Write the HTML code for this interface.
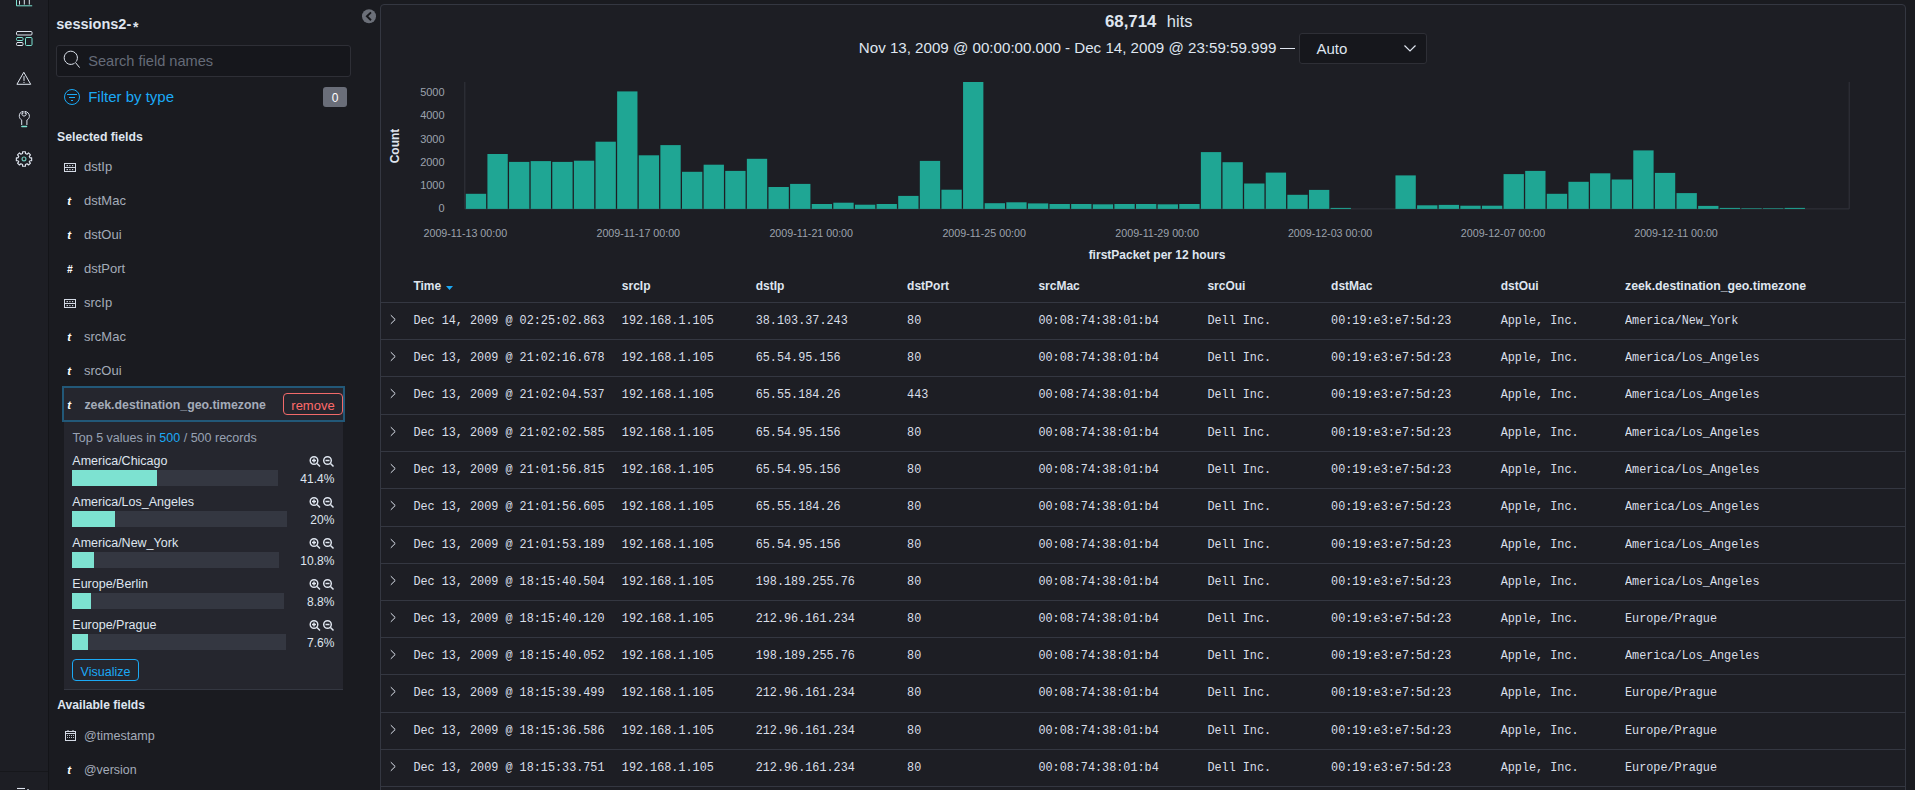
<!DOCTYPE html>
<html><head><meta charset="utf-8"><title>Discover</title>
<style>
html,body{margin:0;padding:0;width:1915px;height:790px;overflow:hidden;background:#1a1b20;}
.t{position:absolute;white-space:pre;}
.r{position:absolute;}
</style></head><body>
<div class="r" style="left:0px;top:0px;width:48px;height:790px;background:#1d1e24;"></div>
<div class="r" style="left:48px;top:0px;width:1px;height:790px;background:#131418;"></div>
<div class="r" style="left:0px;top:771px;width:48px;height:1px;background:#16171b;"></div>
<svg class="r" style="left:0;top:0" width="48" height="790" viewBox="0 0 48 790">
<g fill="none" stroke-width="1" stroke-linecap="round">
 <path d="M16.5 -2 V5.8 H31.8" stroke="#7de2d1"/>
 <path d="M19.5 1 V4.2 M24.3 -1 V4.2 M29.3 -2 V4.2" stroke="#dfe5ef"/>
 <rect x="16.5" y="31.5" width="15.5" height="3.5" rx="1" stroke="#dfe5ef"/>
 <rect x="16.5" y="37.5" width="6.5" height="3" rx="1" stroke="#7de2d1"/>
 <rect x="16.5" y="42.5" width="6.5" height="3" rx="1" stroke="#dfe5ef"/>
 <rect x="25.5" y="37.5" width="6.5" height="8" rx="1" stroke="#7de2d1"/>
 <path d="M24 72.6 L30.7 84.3 H17.3 Z" stroke="#dfe5ef" stroke-linejoin="round"/>
 <path d="M24 76.5 V80.5" stroke="#dfe5ef"/>
 <path d="M24 82.3 V82.6" stroke="#dfe5ef"/>
 <path d="M22.9 111.5 C20.4 111.8 19.1 113.9 19.3 116.4 C19.5 118.3 20.6 119.4 21.7 120.1 V124.6 M25.2 111.5 C27.9 111.8 29.5 113.9 29.4 116.4 C29.2 118.3 28.1 119.4 26.9 120.1 V124.6 M22.9 111.5 V113.6 H21.8 C22 115.3 22.9 116 24.05 116 C25.2 116 26.2 115.3 26.4 113.6 H25.2 V111.5" stroke="#dfe5ef" stroke-linejoin="round"/>
 <path d="M21.8 126.5 H26.6" stroke="#7de2d1" stroke-width="1.3"/>
 <circle cx="24" cy="158.9" r="1.9" stroke="#7de2d1" stroke-width="1.2" opacity="0.85"/>
</g>
<g transform="translate(24 158.9) scale(0.9)" fill="none" stroke="#dfe5ef" stroke-width="1.25" stroke-linejoin="round">
 <path d="M-1.6 -8 H1.6 V-6 L3.5 -5.2 L5 -6.6 L7.2 -4.4 L5.8 -2.9 L6.6 -1.2 H8.5 V2 H6.6 L5.8 3.2 L7.2 4.6 L5 6.8 L3.5 5.4 L1.6 6.2 V8.2 H-1.6 V6.2 L-3.5 5.4 L-5 6.8 L-7.2 4.6 L-5.8 3.2 L-6.6 2 H-8.5 V-1.2 H-6.6 L-5.8 -2.9 L-7.2 -4.4 L-5 -6.6 L-3.5 -5.2 L-1.6 -6 Z"/>
</g>
<path d="M17 788.5 H25" stroke="#dfe5ef" stroke-width="1.1"/><rect x="27" y="789" width="2" height="1" fill="#9aa0aa"/>
</svg>
<div class="t" style="left:56.30px;top:17px;font-size:14.5px;line-height:14.5px;color:#dfe5ef;font-weight:700;font-family:'Liberation Sans', sans-serif;">sessions2-</div>
<div class="t" style="left:133.00px;top:20px;font-size:14px;line-height:14px;color:#dfe5ef;font-weight:700;font-family:'Liberation Sans', sans-serif;">*</div>
<div class="r" style="left:56px;top:45px;width:295px;height:32px;background:#16171c;border:1px solid #2e2f36;border-radius:3px;box-sizing:border-box;"></div>
<svg class="r" style="left:62px;top:50px" width="20" height="20" viewBox="0 0 20 20"><path d="M12.6 13.2 A6.6 6.6 0 1 1 14.2 11.6" fill="none" stroke="#dfe5ef" stroke-width="1"/><path d="M13.3 12.3 L17.6 17.6" stroke="#dfe5ef" stroke-width="1"/></svg>
<div class="t" style="left:88.20px;top:54px;font-size:14.6px;line-height:14.6px;color:#656b78;font-weight:400;font-family:'Liberation Sans', sans-serif;">Search field names</div>
<svg class="r" style="left:62px;top:87px" width="20" height="20" viewBox="0 0 20 20"><circle cx="10" cy="10" r="7.5" fill="none" stroke="#1ba9f5" stroke-width="1"/><path d="M5 7.5 H15 M7 10.5 H13 M9 13.5 H11" stroke="#1ba9f5" stroke-width="1"/></svg>
<div class="t" style="left:88.20px;top:89px;font-size:15px;line-height:15px;color:#1ba9f5;font-weight:400;font-family:'Liberation Sans', sans-serif;">Filter by type</div>
<div class="r" style="left:323px;top:87px;width:24px;height:20px;background:#6a6e79;border-radius:3px;"></div>
<div class="t" style="left:-65.00px;width:800px;text-align:center;top:92px;font-size:12px;line-height:12px;color:#ffffff;font-weight:400;font-family:'Liberation Sans', sans-serif;">0</div>
<div class="t" style="left:57.00px;top:131px;font-size:12.25px;line-height:12.25px;color:#dfe5ef;font-weight:700;font-family:'Liberation Sans', sans-serif;">Selected fields</div>
<svg class="r" style="left:64px;top:162px" width="14" height="12" viewBox="0 0 14 12"><g fill="none" stroke="#d4dae5" stroke-width="1"><rect x="0.5" y="1.5" width="11" height="8"/><path d="M0.5 5.5 H11.5"/></g><g fill="#c8ced8"><rect x="2.5" y="3" width="1.5" height="1.2"/><rect x="5.3" y="3" width="1.2" height="1.2"/><rect x="8" y="3" width="1.2" height="1.2"/><rect x="2.5" y="7" width="1.5" height="1.2"/><rect x="5.3" y="7" width="1.2" height="1.2"/><rect x="8" y="7" width="1.2" height="1.2"/></g></svg>
<div class="t" style="left:84.00px;top:160px;font-size:13px;line-height:13px;color:#a4acb9;font-weight:400;font-family:'Liberation Sans', sans-serif;">dstIp</div>
<div class="t" style="left:67.30px;top:195px;font-size:11.6px;line-height:11.6px;color:#ffffff;font-weight:700;font-family:'Liberation Sans', sans-serif;font-style:italic;">t</div>
<div class="t" style="left:84.00px;top:194px;font-size:13px;line-height:13px;color:#a4acb9;font-weight:400;font-family:'Liberation Sans', sans-serif;">dstMac</div>
<div class="t" style="left:67.30px;top:229px;font-size:11.6px;line-height:11.6px;color:#ffffff;font-weight:700;font-family:'Liberation Sans', sans-serif;font-style:italic;">t</div>
<div class="t" style="left:84.00px;top:228px;font-size:13px;line-height:13px;color:#a4acb9;font-weight:400;font-family:'Liberation Sans', sans-serif;">dstOui</div>
<div class="t" style="left:66.90px;top:265px;font-size:10px;line-height:10px;color:#ffffff;font-weight:700;font-family:'Liberation Sans', sans-serif;font-style:italic;">#</div>
<div class="t" style="left:84.00px;top:262px;font-size:13px;line-height:13px;color:#a4acb9;font-weight:400;font-family:'Liberation Sans', sans-serif;">dstPort</div>
<svg class="r" style="left:64px;top:298px" width="14" height="12" viewBox="0 0 14 12"><g fill="none" stroke="#d4dae5" stroke-width="1"><rect x="0.5" y="1.5" width="11" height="8"/><path d="M0.5 5.5 H11.5"/></g><g fill="#c8ced8"><rect x="2.5" y="3" width="1.5" height="1.2"/><rect x="5.3" y="3" width="1.2" height="1.2"/><rect x="8" y="3" width="1.2" height="1.2"/><rect x="2.5" y="7" width="1.5" height="1.2"/><rect x="5.3" y="7" width="1.2" height="1.2"/><rect x="8" y="7" width="1.2" height="1.2"/></g></svg>
<div class="t" style="left:84.00px;top:296px;font-size:13px;line-height:13px;color:#a4acb9;font-weight:400;font-family:'Liberation Sans', sans-serif;">srcIp</div>
<div class="t" style="left:67.30px;top:331px;font-size:11.6px;line-height:11.6px;color:#ffffff;font-weight:700;font-family:'Liberation Sans', sans-serif;font-style:italic;">t</div>
<div class="t" style="left:84.00px;top:330px;font-size:13px;line-height:13px;color:#a4acb9;font-weight:400;font-family:'Liberation Sans', sans-serif;">srcMac</div>
<div class="t" style="left:67.30px;top:365px;font-size:11.6px;line-height:11.6px;color:#ffffff;font-weight:700;font-family:'Liberation Sans', sans-serif;font-style:italic;">t</div>
<div class="t" style="left:84.00px;top:364px;font-size:13px;line-height:13px;color:#a4acb9;font-weight:400;font-family:'Liberation Sans', sans-serif;">srcOui</div>
<div class="r" style="left:62px;top:386px;width:283px;height:36px;background:#25262e;border:2px solid #225878;box-sizing:border-box;"></div>
<div class="t" style="left:67.30px;top:399px;font-size:11.6px;line-height:11.6px;color:#ffffff;font-weight:700;font-family:'Liberation Sans', sans-serif;font-style:italic;">t</div>
<div class="t" style="left:84.40px;top:399px;font-size:12.33px;line-height:12.33px;color:#a4acb9;font-weight:700;font-family:'Liberation Sans', sans-serif;">zeek.destination_geo.timezone</div>
<div class="r" style="left:283px;top:393px;width:60px;height:22px;border:1px solid #f26a6a;border-radius:4px;box-sizing:border-box;"></div>
<div class="t" style="left:-87.00px;width:800px;text-align:center;top:399px;font-size:13px;line-height:13px;color:#ff6b6b;font-weight:400;font-family:'Liberation Sans', sans-serif;">remove</div>
<div class="r" style="left:64px;top:422px;width:279px;height:268px;background:#25262e;"></div>
<div class="r" style="left:64px;top:689px;width:279px;height:1px;background:#343741;"></div>
<div class="t" style="left:72.50px;top:432px;font-size:12.5px;line-height:12.5px;color:#98a2b3;font-weight:400;font-family:'Liberation Sans', sans-serif;">Top 5 values in <span style="color:#1ba9f5">500</span> / 500 records</div>
<div class="t" style="left:72.30px;top:455px;font-size:12.5px;line-height:12.5px;color:#dfe5ef;font-weight:400;font-family:'Liberation Sans', sans-serif;">America/Chicago</div>
<div class="r" style="left:72px;top:470px;width:206px;height:16px;background:#343741;"></div>
<div class="r" style="left:72px;top:470px;width:85px;height:16px;background:#7de2d1;"></div>
<div class="t" style="right:1580.70px;text-align:right;top:473px;font-size:12px;line-height:12px;color:#dfe5ef;font-weight:400;font-family:'Liberation Sans', sans-serif;">41.4%</div>
<svg class="r" style="left:308px;top:455px" width="28" height="13" viewBox="0 0 28 13"><g fill="none" stroke="#dfe5ef" stroke-width="1.45"><circle cx="6" cy="5.5" r="3.8"/><path d="M9 8.5 L12 11.5 M4 5.5 H8 M6 3.5 V7.5"/><circle cx="19.5" cy="5.5" r="3.8"/><path d="M22.5 8.5 L25.5 11.5 M17.5 5.5 H21.5"/></g></svg>
<div class="t" style="left:72.30px;top:496px;font-size:12.5px;line-height:12.5px;color:#dfe5ef;font-weight:400;font-family:'Liberation Sans', sans-serif;">America/Los_Angeles</div>
<div class="r" style="left:72px;top:511px;width:215px;height:16px;background:#343741;"></div>
<div class="r" style="left:72px;top:511px;width:43px;height:16px;background:#7de2d1;"></div>
<div class="t" style="right:1580.70px;text-align:right;top:514px;font-size:12px;line-height:12px;color:#dfe5ef;font-weight:400;font-family:'Liberation Sans', sans-serif;">20%</div>
<svg class="r" style="left:308px;top:496px" width="28" height="13" viewBox="0 0 28 13"><g fill="none" stroke="#dfe5ef" stroke-width="1.45"><circle cx="6" cy="5.5" r="3.8"/><path d="M9 8.5 L12 11.5 M4 5.5 H8 M6 3.5 V7.5"/><circle cx="19.5" cy="5.5" r="3.8"/><path d="M22.5 8.5 L25.5 11.5 M17.5 5.5 H21.5"/></g></svg>
<div class="t" style="left:72.30px;top:537px;font-size:12.5px;line-height:12.5px;color:#dfe5ef;font-weight:400;font-family:'Liberation Sans', sans-serif;">America/New_York</div>
<div class="r" style="left:72px;top:552px;width:207px;height:16px;background:#343741;"></div>
<div class="r" style="left:72px;top:552px;width:22px;height:16px;background:#7de2d1;"></div>
<div class="t" style="right:1580.70px;text-align:right;top:555px;font-size:12px;line-height:12px;color:#dfe5ef;font-weight:400;font-family:'Liberation Sans', sans-serif;">10.8%</div>
<svg class="r" style="left:308px;top:537px" width="28" height="13" viewBox="0 0 28 13"><g fill="none" stroke="#dfe5ef" stroke-width="1.45"><circle cx="6" cy="5.5" r="3.8"/><path d="M9 8.5 L12 11.5 M4 5.5 H8 M6 3.5 V7.5"/><circle cx="19.5" cy="5.5" r="3.8"/><path d="M22.5 8.5 L25.5 11.5 M17.5 5.5 H21.5"/></g></svg>
<div class="t" style="left:72.30px;top:578px;font-size:12.5px;line-height:12.5px;color:#dfe5ef;font-weight:400;font-family:'Liberation Sans', sans-serif;">Europe/Berlin</div>
<div class="r" style="left:72px;top:593px;width:212px;height:16px;background:#343741;"></div>
<div class="r" style="left:72px;top:593px;width:19px;height:16px;background:#7de2d1;"></div>
<div class="t" style="right:1580.70px;text-align:right;top:596px;font-size:12px;line-height:12px;color:#dfe5ef;font-weight:400;font-family:'Liberation Sans', sans-serif;">8.8%</div>
<svg class="r" style="left:308px;top:578px" width="28" height="13" viewBox="0 0 28 13"><g fill="none" stroke="#dfe5ef" stroke-width="1.45"><circle cx="6" cy="5.5" r="3.8"/><path d="M9 8.5 L12 11.5 M4 5.5 H8 M6 3.5 V7.5"/><circle cx="19.5" cy="5.5" r="3.8"/><path d="M22.5 8.5 L25.5 11.5 M17.5 5.5 H21.5"/></g></svg>
<div class="t" style="left:72.30px;top:619px;font-size:12.5px;line-height:12.5px;color:#dfe5ef;font-weight:400;font-family:'Liberation Sans', sans-serif;">Europe/Prague</div>
<div class="r" style="left:72px;top:634px;width:214px;height:16px;background:#343741;"></div>
<div class="r" style="left:72px;top:634px;width:16px;height:16px;background:#7de2d1;"></div>
<div class="t" style="right:1580.70px;text-align:right;top:637px;font-size:12px;line-height:12px;color:#dfe5ef;font-weight:400;font-family:'Liberation Sans', sans-serif;">7.6%</div>
<svg class="r" style="left:308px;top:619px" width="28" height="13" viewBox="0 0 28 13"><g fill="none" stroke="#dfe5ef" stroke-width="1.45"><circle cx="6" cy="5.5" r="3.8"/><path d="M9 8.5 L12 11.5 M4 5.5 H8 M6 3.5 V7.5"/><circle cx="19.5" cy="5.5" r="3.8"/><path d="M22.5 8.5 L25.5 11.5 M17.5 5.5 H21.5"/></g></svg>
<div class="r" style="left:72px;top:659px;width:67px;height:22px;border:1px solid #1ba9f5;border-radius:4px;box-sizing:border-box;"></div>
<div class="t" style="left:-294.50px;width:800px;text-align:center;top:666px;font-size:12.5px;line-height:12.5px;color:#1ba9f5;font-weight:400;font-family:'Liberation Sans', sans-serif;">Visualize</div>
<div class="t" style="left:57.30px;top:699px;font-size:12.1px;line-height:12.1px;color:#dfe5ef;font-weight:700;font-family:'Liberation Sans', sans-serif;">Available fields</div>
<svg class="r" style="left:64px;top:729px" width="13" height="13" viewBox="0 0 13 13"><g fill="none" stroke="#d4dae5" stroke-width="1"><rect x="1.5" y="2.5" width="10" height="9"/><path d="M1.5 4.5 H11.5 M4 1 V2.5 M9 1 V2.5"/></g><g fill="#b8bec8"><rect x="3" y="6" width="1" height="1"/><rect x="5" y="6" width="1" height="1"/><rect x="7" y="6" width="1" height="1"/><rect x="9" y="6" width="1" height="1"/><rect x="3" y="8" width="1" height="1"/><rect x="5" y="8" width="1" height="1"/><rect x="7" y="8" width="1" height="1"/><rect x="9" y="8" width="1" height="1"/></g></svg>
<div class="t" style="left:84.00px;top:730px;font-size:12.55px;line-height:12.55px;color:#a4acb9;font-weight:400;font-family:'Liberation Sans', sans-serif;">@timestamp</div>
<div class="t" style="left:67.30px;top:764px;font-size:11.6px;line-height:11.6px;color:#ffffff;font-weight:700;font-family:'Liberation Sans', sans-serif;font-style:italic;">t</div>
<div class="t" style="left:84.00px;top:764px;font-size:12.4px;line-height:12.4px;color:#a4acb9;font-weight:400;font-family:'Liberation Sans', sans-serif;">@version</div>
<svg class="r" style="left:361px;top:9px" width="16" height="16" viewBox="0 0 16 16"><circle cx="8" cy="7.25" r="7" fill="#6b6f78"/><path d="M10 3.4 L5.9 7.3 L10 11.2" fill="none" stroke="#16171b" stroke-width="1.9"/></svg>
<div class="r" style="left:380px;top:4px;width:1526px;height:800px;background:#1d1e24;border:1px solid #343741;border-radius:4px;box-sizing:border-box;"></div>
<div class="t" style="left:1105.00px;top:14px;font-size:16.8px;line-height:16.8px;color:#dfe5ef;font-weight:700;font-family:'Liberation Sans', sans-serif;">68,714</div>
<div class="t" style="left:1166.80px;top:13px;font-size:16.5px;line-height:16.5px;color:#dfe5ef;font-weight:400;font-family:'Liberation Sans', sans-serif;">hits</div>
<div class="t" style="left:858.80px;top:40px;font-size:15.14px;line-height:15.14px;color:#dfe5ef;font-weight:400;font-family:'Liberation Sans', sans-serif;">Nov 13, 2009 @ 00:00:00.000 - Dec 14, 2009 @ 23:59:59.999</div>
<div class="r" style="left:1280px;top:48px;width:15px;height:1px;background:#dfe5ef;"></div>
<div class="r" style="left:1299px;top:33px;width:128px;height:31px;background:#16171c;border:1px solid #2e2f36;border-radius:3px;box-sizing:border-box;"></div>
<div class="t" style="left:1316.50px;top:41px;font-size:15px;line-height:15px;color:#dfe5ef;font-weight:400;font-family:'Liberation Sans', sans-serif;">Auto</div>
<svg class="r" style="left:1402px;top:43px" width="16" height="10" viewBox="0 0 16 10"><path d="M2.5 2.5 L8 8 L13.5 2.5" fill="none" stroke="#dfe5ef" stroke-width="1.2"/></svg>
<svg class="r" style="left:0;top:0" width="1915" height="270" viewBox="0 0 1915 270">
<path d="M464.8 82 V208.9 M1849.2 82 V208.9 M464.8 208.9 H1849.2" stroke="#32343c" stroke-width="1" fill="none"/>
<g fill="#1fa694"><rect x="465.80" y="193.80" width="20.32" height="15.10"/><rect x="487.42" y="154.00" width="20.32" height="54.90"/><rect x="509.04" y="161.90" width="20.32" height="47.00"/><rect x="530.66" y="161.10" width="20.32" height="47.80"/><rect x="552.28" y="161.90" width="20.32" height="47.00"/><rect x="573.90" y="160.70" width="20.32" height="48.20"/><rect x="595.52" y="141.70" width="20.32" height="67.20"/><rect x="617.14" y="91.40" width="20.32" height="117.50"/><rect x="638.76" y="155.30" width="20.32" height="53.60"/><rect x="660.38" y="145.10" width="20.32" height="63.80"/><rect x="682.00" y="171.80" width="20.32" height="37.10"/><rect x="703.62" y="164.70" width="20.32" height="44.20"/><rect x="725.24" y="170.90" width="20.32" height="38.00"/><rect x="746.86" y="158.80" width="20.32" height="50.10"/><rect x="768.48" y="187.00" width="20.32" height="21.90"/><rect x="790.10" y="183.90" width="20.32" height="25.00"/><rect x="811.72" y="204.00" width="20.32" height="4.90"/><rect x="833.34" y="202.70" width="20.32" height="6.20"/><rect x="854.96" y="204.70" width="20.32" height="4.20"/><rect x="876.58" y="204.00" width="20.32" height="4.90"/><rect x="898.20" y="195.90" width="20.32" height="13.00"/><rect x="919.82" y="160.90" width="20.32" height="48.00"/><rect x="941.44" y="189.70" width="20.32" height="19.20"/><rect x="963.06" y="82.00" width="20.32" height="126.90"/><rect x="984.68" y="203.20" width="20.32" height="5.70"/><rect x="1006.30" y="202.30" width="20.32" height="6.60"/><rect x="1027.92" y="203.40" width="20.32" height="5.50"/><rect x="1049.54" y="204.00" width="20.32" height="4.90"/><rect x="1071.16" y="204.00" width="20.32" height="4.90"/><rect x="1092.78" y="204.30" width="20.32" height="4.60"/><rect x="1114.40" y="204.00" width="20.32" height="4.90"/><rect x="1136.02" y="204.00" width="20.32" height="4.90"/><rect x="1157.64" y="204.30" width="20.32" height="4.60"/><rect x="1179.26" y="204.00" width="20.32" height="4.90"/><rect x="1200.88" y="152.10" width="20.32" height="56.80"/><rect x="1222.50" y="162.20" width="20.32" height="46.70"/><rect x="1244.12" y="183.50" width="20.32" height="25.40"/><rect x="1265.74" y="172.60" width="20.32" height="36.30"/><rect x="1287.36" y="194.80" width="20.32" height="14.10"/><rect x="1308.98" y="189.90" width="20.32" height="19.00"/><rect x="1330.60" y="207.90" width="20.32" height="1.00"/><rect x="1395.46" y="175.40" width="20.32" height="33.50"/><rect x="1417.08" y="205.30" width="20.32" height="3.60"/><rect x="1438.70" y="204.90" width="20.32" height="4.00"/><rect x="1460.32" y="205.70" width="20.32" height="3.20"/><rect x="1481.94" y="205.70" width="20.32" height="3.20"/><rect x="1503.56" y="174.10" width="20.32" height="34.80"/><rect x="1525.18" y="170.90" width="20.32" height="38.00"/><rect x="1546.80" y="193.80" width="20.32" height="15.10"/><rect x="1568.42" y="181.80" width="20.32" height="27.10"/><rect x="1590.04" y="173.30" width="20.32" height="35.60"/><rect x="1611.66" y="179.50" width="20.32" height="29.40"/><rect x="1633.28" y="150.40" width="20.32" height="58.50"/><rect x="1654.90" y="172.90" width="20.32" height="36.00"/><rect x="1676.52" y="193.10" width="20.32" height="15.80"/><rect x="1698.14" y="205.90" width="20.32" height="3.00"/><rect x="1719.76" y="207.90" width="20.32" height="1.00"/><rect x="1741.38" y="208.30" width="20.32" height="0.60"/><rect x="1763.00" y="208.30" width="20.32" height="0.60"/><rect x="1784.62" y="207.90" width="20.32" height="1.00"/></g>
</svg>
<div class="t" style="right:1470.40px;text-align:right;top:203px;font-size:11px;line-height:11px;color:#9ca2ad;font-weight:400;font-family:'Liberation Sans', sans-serif;">0</div>
<div class="t" style="right:1470.40px;text-align:right;top:180px;font-size:11px;line-height:11px;color:#9ca2ad;font-weight:400;font-family:'Liberation Sans', sans-serif;">1000</div>
<div class="t" style="right:1470.40px;text-align:right;top:157px;font-size:11px;line-height:11px;color:#9ca2ad;font-weight:400;font-family:'Liberation Sans', sans-serif;">2000</div>
<div class="t" style="right:1470.40px;text-align:right;top:134px;font-size:11px;line-height:11px;color:#9ca2ad;font-weight:400;font-family:'Liberation Sans', sans-serif;">3000</div>
<div class="t" style="right:1470.40px;text-align:right;top:110px;font-size:11px;line-height:11px;color:#9ca2ad;font-weight:400;font-family:'Liberation Sans', sans-serif;">4000</div>
<div class="t" style="right:1470.40px;text-align:right;top:87px;font-size:11px;line-height:11px;color:#9ca2ad;font-weight:400;font-family:'Liberation Sans', sans-serif;">5000</div>
<div class="t" style="left:394.7px;top:145.5px;transform:translate(-50%,-50%) rotate(-90deg);font:700 12px/12px 'Liberation Sans',sans-serif;color:#dfe5ef;white-space:nowrap">Count</div>
<div class="t" style="left:65.30px;width:800px;text-align:center;top:228px;font-size:10.7px;line-height:10.7px;color:#9ca2ad;font-weight:400;font-family:'Liberation Sans', sans-serif;">2009-11-13 00:00</div>
<div class="t" style="left:238.26px;width:800px;text-align:center;top:228px;font-size:10.7px;line-height:10.7px;color:#9ca2ad;font-weight:400;font-family:'Liberation Sans', sans-serif;">2009-11-17 00:00</div>
<div class="t" style="left:411.22px;width:800px;text-align:center;top:228px;font-size:10.7px;line-height:10.7px;color:#9ca2ad;font-weight:400;font-family:'Liberation Sans', sans-serif;">2009-11-21 00:00</div>
<div class="t" style="left:584.18px;width:800px;text-align:center;top:228px;font-size:10.7px;line-height:10.7px;color:#9ca2ad;font-weight:400;font-family:'Liberation Sans', sans-serif;">2009-11-25 00:00</div>
<div class="t" style="left:757.14px;width:800px;text-align:center;top:228px;font-size:10.7px;line-height:10.7px;color:#9ca2ad;font-weight:400;font-family:'Liberation Sans', sans-serif;">2009-11-29 00:00</div>
<div class="t" style="left:930.10px;width:800px;text-align:center;top:228px;font-size:10.7px;line-height:10.7px;color:#9ca2ad;font-weight:400;font-family:'Liberation Sans', sans-serif;">2009-12-03 00:00</div>
<div class="t" style="left:1103.06px;width:800px;text-align:center;top:228px;font-size:10.7px;line-height:10.7px;color:#9ca2ad;font-weight:400;font-family:'Liberation Sans', sans-serif;">2009-12-07 00:00</div>
<div class="t" style="left:1276.02px;width:800px;text-align:center;top:228px;font-size:10.7px;line-height:10.7px;color:#9ca2ad;font-weight:400;font-family:'Liberation Sans', sans-serif;">2009-12-11 00:00</div>
<div class="t" style="left:757.00px;width:800px;text-align:center;top:249px;font-size:12px;line-height:12px;color:#dfe5ef;font-weight:700;font-family:'Liberation Sans', sans-serif;">firstPacket per 12 hours</div>
<div class="t" style="left:413.40px;top:280px;font-size:12px;line-height:12px;color:#dfe5ef;font-weight:700;font-family:'Liberation Sans', sans-serif;">Time</div>
<div class="t" style="left:621.80px;top:280px;font-size:12px;line-height:12px;color:#dfe5ef;font-weight:700;font-family:'Liberation Sans', sans-serif;">srcIp</div>
<div class="t" style="left:755.70px;top:280px;font-size:12px;line-height:12px;color:#dfe5ef;font-weight:700;font-family:'Liberation Sans', sans-serif;">dstIp</div>
<div class="t" style="left:907.10px;top:280px;font-size:12px;line-height:12px;color:#dfe5ef;font-weight:700;font-family:'Liberation Sans', sans-serif;">dstPort</div>
<div class="t" style="left:1038.40px;top:280px;font-size:12px;line-height:12px;color:#dfe5ef;font-weight:700;font-family:'Liberation Sans', sans-serif;">srcMac</div>
<div class="t" style="left:1207.40px;top:280px;font-size:12px;line-height:12px;color:#dfe5ef;font-weight:700;font-family:'Liberation Sans', sans-serif;">srcOui</div>
<div class="t" style="left:1331.10px;top:280px;font-size:12px;line-height:12px;color:#dfe5ef;font-weight:700;font-family:'Liberation Sans', sans-serif;">dstMac</div>
<div class="t" style="left:1500.70px;top:280px;font-size:12px;line-height:12px;color:#dfe5ef;font-weight:700;font-family:'Liberation Sans', sans-serif;">dstOui</div>
<div class="t" style="left:1625.00px;top:280px;font-size:12.3px;line-height:12.3px;color:#dfe5ef;font-weight:700;font-family:'Liberation Sans', sans-serif;">zeek.destination_geo.timezone</div>
<svg class="r" style="left:445px;top:285px" width="9" height="6" viewBox="0 0 9 6"><path d="M1 1 H8 L4.5 5 Z" fill="#1ba9f5"/></svg>
<div class="r" style="left:381px;top:302px;width:1524px;height:1px;background:#343741;"></div>
<svg class="r" style="left:388px;top:313px" width="10" height="13" viewBox="0 0 10 13"><path d="M2.8 2.2 L7.2 6.5 L2.8 10.8" fill="none" stroke="#dfe5ef" stroke-width="1"/></svg>
<div class="t" style="left:413.40px;top:316px;font-size:11.8px;line-height:11.8px;color:#d9dfe8;font-weight:400;font-family:'Liberation Mono', monospace;transform:scaleY(1.08);transform-origin:0 8px;">Dec 14, 2009 @ 02:25:02.863</div>
<div class="t" style="left:621.80px;top:316px;font-size:11.8px;line-height:11.8px;color:#d9dfe8;font-weight:400;font-family:'Liberation Mono', monospace;transform:scaleY(1.08);transform-origin:0 8px;">192.168.1.105</div>
<div class="t" style="left:755.70px;top:316px;font-size:11.8px;line-height:11.8px;color:#d9dfe8;font-weight:400;font-family:'Liberation Mono', monospace;transform:scaleY(1.08);transform-origin:0 8px;">38.103.37.243</div>
<div class="t" style="left:907.10px;top:316px;font-size:11.8px;line-height:11.8px;color:#d9dfe8;font-weight:400;font-family:'Liberation Mono', monospace;transform:scaleY(1.08);transform-origin:0 8px;">80</div>
<div class="t" style="left:1038.40px;top:316px;font-size:11.8px;line-height:11.8px;color:#d9dfe8;font-weight:400;font-family:'Liberation Mono', monospace;transform:scaleY(1.08);transform-origin:0 8px;">00:08:74:38:01:b4</div>
<div class="t" style="left:1207.40px;top:316px;font-size:11.8px;line-height:11.8px;color:#d9dfe8;font-weight:400;font-family:'Liberation Mono', monospace;transform:scaleY(1.08);transform-origin:0 8px;">Dell Inc.</div>
<div class="t" style="left:1331.10px;top:316px;font-size:11.8px;line-height:11.8px;color:#d9dfe8;font-weight:400;font-family:'Liberation Mono', monospace;transform:scaleY(1.08);transform-origin:0 8px;">00:19:e3:e7:5d:23</div>
<div class="t" style="left:1500.70px;top:316px;font-size:11.8px;line-height:11.8px;color:#d9dfe8;font-weight:400;font-family:'Liberation Mono', monospace;transform:scaleY(1.08);transform-origin:0 8px;">Apple, Inc.</div>
<div class="t" style="left:1625.00px;top:316px;font-size:11.8px;line-height:11.8px;color:#d9dfe8;font-weight:400;font-family:'Liberation Mono', monospace;transform:scaleY(1.08);transform-origin:0 8px;">America/New_York</div>
<div class="r" style="left:381px;top:339px;width:1524px;height:1px;background:#343741;"></div>
<svg class="r" style="left:388px;top:350px" width="10" height="13" viewBox="0 0 10 13"><path d="M2.8 2.2 L7.2 6.5 L2.8 10.8" fill="none" stroke="#dfe5ef" stroke-width="1"/></svg>
<div class="t" style="left:413.40px;top:353px;font-size:11.8px;line-height:11.8px;color:#d9dfe8;font-weight:400;font-family:'Liberation Mono', monospace;transform:scaleY(1.08);transform-origin:0 8px;">Dec 13, 2009 @ 21:02:16.678</div>
<div class="t" style="left:621.80px;top:353px;font-size:11.8px;line-height:11.8px;color:#d9dfe8;font-weight:400;font-family:'Liberation Mono', monospace;transform:scaleY(1.08);transform-origin:0 8px;">192.168.1.105</div>
<div class="t" style="left:755.70px;top:353px;font-size:11.8px;line-height:11.8px;color:#d9dfe8;font-weight:400;font-family:'Liberation Mono', monospace;transform:scaleY(1.08);transform-origin:0 8px;">65.54.95.156</div>
<div class="t" style="left:907.10px;top:353px;font-size:11.8px;line-height:11.8px;color:#d9dfe8;font-weight:400;font-family:'Liberation Mono', monospace;transform:scaleY(1.08);transform-origin:0 8px;">80</div>
<div class="t" style="left:1038.40px;top:353px;font-size:11.8px;line-height:11.8px;color:#d9dfe8;font-weight:400;font-family:'Liberation Mono', monospace;transform:scaleY(1.08);transform-origin:0 8px;">00:08:74:38:01:b4</div>
<div class="t" style="left:1207.40px;top:353px;font-size:11.8px;line-height:11.8px;color:#d9dfe8;font-weight:400;font-family:'Liberation Mono', monospace;transform:scaleY(1.08);transform-origin:0 8px;">Dell Inc.</div>
<div class="t" style="left:1331.10px;top:353px;font-size:11.8px;line-height:11.8px;color:#d9dfe8;font-weight:400;font-family:'Liberation Mono', monospace;transform:scaleY(1.08);transform-origin:0 8px;">00:19:e3:e7:5d:23</div>
<div class="t" style="left:1500.70px;top:353px;font-size:11.8px;line-height:11.8px;color:#d9dfe8;font-weight:400;font-family:'Liberation Mono', monospace;transform:scaleY(1.08);transform-origin:0 8px;">Apple, Inc.</div>
<div class="t" style="left:1625.00px;top:353px;font-size:11.8px;line-height:11.8px;color:#d9dfe8;font-weight:400;font-family:'Liberation Mono', monospace;transform:scaleY(1.08);transform-origin:0 8px;">America/Los_Angeles</div>
<div class="r" style="left:381px;top:376px;width:1524px;height:1px;background:#343741;"></div>
<svg class="r" style="left:388px;top:387px" width="10" height="13" viewBox="0 0 10 13"><path d="M2.8 2.2 L7.2 6.5 L2.8 10.8" fill="none" stroke="#dfe5ef" stroke-width="1"/></svg>
<div class="t" style="left:413.40px;top:390px;font-size:11.8px;line-height:11.8px;color:#d9dfe8;font-weight:400;font-family:'Liberation Mono', monospace;transform:scaleY(1.08);transform-origin:0 8px;">Dec 13, 2009 @ 21:02:04.537</div>
<div class="t" style="left:621.80px;top:390px;font-size:11.8px;line-height:11.8px;color:#d9dfe8;font-weight:400;font-family:'Liberation Mono', monospace;transform:scaleY(1.08);transform-origin:0 8px;">192.168.1.105</div>
<div class="t" style="left:755.70px;top:390px;font-size:11.8px;line-height:11.8px;color:#d9dfe8;font-weight:400;font-family:'Liberation Mono', monospace;transform:scaleY(1.08);transform-origin:0 8px;">65.55.184.26</div>
<div class="t" style="left:907.10px;top:390px;font-size:11.8px;line-height:11.8px;color:#d9dfe8;font-weight:400;font-family:'Liberation Mono', monospace;transform:scaleY(1.08);transform-origin:0 8px;">443</div>
<div class="t" style="left:1038.40px;top:390px;font-size:11.8px;line-height:11.8px;color:#d9dfe8;font-weight:400;font-family:'Liberation Mono', monospace;transform:scaleY(1.08);transform-origin:0 8px;">00:08:74:38:01:b4</div>
<div class="t" style="left:1207.40px;top:390px;font-size:11.8px;line-height:11.8px;color:#d9dfe8;font-weight:400;font-family:'Liberation Mono', monospace;transform:scaleY(1.08);transform-origin:0 8px;">Dell Inc.</div>
<div class="t" style="left:1331.10px;top:390px;font-size:11.8px;line-height:11.8px;color:#d9dfe8;font-weight:400;font-family:'Liberation Mono', monospace;transform:scaleY(1.08);transform-origin:0 8px;">00:19:e3:e7:5d:23</div>
<div class="t" style="left:1500.70px;top:390px;font-size:11.8px;line-height:11.8px;color:#d9dfe8;font-weight:400;font-family:'Liberation Mono', monospace;transform:scaleY(1.08);transform-origin:0 8px;">Apple, Inc.</div>
<div class="t" style="left:1625.00px;top:390px;font-size:11.8px;line-height:11.8px;color:#d9dfe8;font-weight:400;font-family:'Liberation Mono', monospace;transform:scaleY(1.08);transform-origin:0 8px;">America/Los_Angeles</div>
<div class="r" style="left:381px;top:414px;width:1524px;height:1px;background:#343741;"></div>
<svg class="r" style="left:388px;top:425px" width="10" height="13" viewBox="0 0 10 13"><path d="M2.8 2.2 L7.2 6.5 L2.8 10.8" fill="none" stroke="#dfe5ef" stroke-width="1"/></svg>
<div class="t" style="left:413.40px;top:428px;font-size:11.8px;line-height:11.8px;color:#d9dfe8;font-weight:400;font-family:'Liberation Mono', monospace;transform:scaleY(1.08);transform-origin:0 8px;">Dec 13, 2009 @ 21:02:02.585</div>
<div class="t" style="left:621.80px;top:428px;font-size:11.8px;line-height:11.8px;color:#d9dfe8;font-weight:400;font-family:'Liberation Mono', monospace;transform:scaleY(1.08);transform-origin:0 8px;">192.168.1.105</div>
<div class="t" style="left:755.70px;top:428px;font-size:11.8px;line-height:11.8px;color:#d9dfe8;font-weight:400;font-family:'Liberation Mono', monospace;transform:scaleY(1.08);transform-origin:0 8px;">65.54.95.156</div>
<div class="t" style="left:907.10px;top:428px;font-size:11.8px;line-height:11.8px;color:#d9dfe8;font-weight:400;font-family:'Liberation Mono', monospace;transform:scaleY(1.08);transform-origin:0 8px;">80</div>
<div class="t" style="left:1038.40px;top:428px;font-size:11.8px;line-height:11.8px;color:#d9dfe8;font-weight:400;font-family:'Liberation Mono', monospace;transform:scaleY(1.08);transform-origin:0 8px;">00:08:74:38:01:b4</div>
<div class="t" style="left:1207.40px;top:428px;font-size:11.8px;line-height:11.8px;color:#d9dfe8;font-weight:400;font-family:'Liberation Mono', monospace;transform:scaleY(1.08);transform-origin:0 8px;">Dell Inc.</div>
<div class="t" style="left:1331.10px;top:428px;font-size:11.8px;line-height:11.8px;color:#d9dfe8;font-weight:400;font-family:'Liberation Mono', monospace;transform:scaleY(1.08);transform-origin:0 8px;">00:19:e3:e7:5d:23</div>
<div class="t" style="left:1500.70px;top:428px;font-size:11.8px;line-height:11.8px;color:#d9dfe8;font-weight:400;font-family:'Liberation Mono', monospace;transform:scaleY(1.08);transform-origin:0 8px;">Apple, Inc.</div>
<div class="t" style="left:1625.00px;top:428px;font-size:11.8px;line-height:11.8px;color:#d9dfe8;font-weight:400;font-family:'Liberation Mono', monospace;transform:scaleY(1.08);transform-origin:0 8px;">America/Los_Angeles</div>
<div class="r" style="left:381px;top:451px;width:1524px;height:1px;background:#343741;"></div>
<svg class="r" style="left:388px;top:462px" width="10" height="13" viewBox="0 0 10 13"><path d="M2.8 2.2 L7.2 6.5 L2.8 10.8" fill="none" stroke="#dfe5ef" stroke-width="1"/></svg>
<div class="t" style="left:413.40px;top:465px;font-size:11.8px;line-height:11.8px;color:#d9dfe8;font-weight:400;font-family:'Liberation Mono', monospace;transform:scaleY(1.08);transform-origin:0 8px;">Dec 13, 2009 @ 21:01:56.815</div>
<div class="t" style="left:621.80px;top:465px;font-size:11.8px;line-height:11.8px;color:#d9dfe8;font-weight:400;font-family:'Liberation Mono', monospace;transform:scaleY(1.08);transform-origin:0 8px;">192.168.1.105</div>
<div class="t" style="left:755.70px;top:465px;font-size:11.8px;line-height:11.8px;color:#d9dfe8;font-weight:400;font-family:'Liberation Mono', monospace;transform:scaleY(1.08);transform-origin:0 8px;">65.54.95.156</div>
<div class="t" style="left:907.10px;top:465px;font-size:11.8px;line-height:11.8px;color:#d9dfe8;font-weight:400;font-family:'Liberation Mono', monospace;transform:scaleY(1.08);transform-origin:0 8px;">80</div>
<div class="t" style="left:1038.40px;top:465px;font-size:11.8px;line-height:11.8px;color:#d9dfe8;font-weight:400;font-family:'Liberation Mono', monospace;transform:scaleY(1.08);transform-origin:0 8px;">00:08:74:38:01:b4</div>
<div class="t" style="left:1207.40px;top:465px;font-size:11.8px;line-height:11.8px;color:#d9dfe8;font-weight:400;font-family:'Liberation Mono', monospace;transform:scaleY(1.08);transform-origin:0 8px;">Dell Inc.</div>
<div class="t" style="left:1331.10px;top:465px;font-size:11.8px;line-height:11.8px;color:#d9dfe8;font-weight:400;font-family:'Liberation Mono', monospace;transform:scaleY(1.08);transform-origin:0 8px;">00:19:e3:e7:5d:23</div>
<div class="t" style="left:1500.70px;top:465px;font-size:11.8px;line-height:11.8px;color:#d9dfe8;font-weight:400;font-family:'Liberation Mono', monospace;transform:scaleY(1.08);transform-origin:0 8px;">Apple, Inc.</div>
<div class="t" style="left:1625.00px;top:465px;font-size:11.8px;line-height:11.8px;color:#d9dfe8;font-weight:400;font-family:'Liberation Mono', monospace;transform:scaleY(1.08);transform-origin:0 8px;">America/Los_Angeles</div>
<div class="r" style="left:381px;top:488px;width:1524px;height:1px;background:#343741;"></div>
<svg class="r" style="left:388px;top:499px" width="10" height="13" viewBox="0 0 10 13"><path d="M2.8 2.2 L7.2 6.5 L2.8 10.8" fill="none" stroke="#dfe5ef" stroke-width="1"/></svg>
<div class="t" style="left:413.40px;top:502px;font-size:11.8px;line-height:11.8px;color:#d9dfe8;font-weight:400;font-family:'Liberation Mono', monospace;transform:scaleY(1.08);transform-origin:0 8px;">Dec 13, 2009 @ 21:01:56.605</div>
<div class="t" style="left:621.80px;top:502px;font-size:11.8px;line-height:11.8px;color:#d9dfe8;font-weight:400;font-family:'Liberation Mono', monospace;transform:scaleY(1.08);transform-origin:0 8px;">192.168.1.105</div>
<div class="t" style="left:755.70px;top:502px;font-size:11.8px;line-height:11.8px;color:#d9dfe8;font-weight:400;font-family:'Liberation Mono', monospace;transform:scaleY(1.08);transform-origin:0 8px;">65.55.184.26</div>
<div class="t" style="left:907.10px;top:502px;font-size:11.8px;line-height:11.8px;color:#d9dfe8;font-weight:400;font-family:'Liberation Mono', monospace;transform:scaleY(1.08);transform-origin:0 8px;">80</div>
<div class="t" style="left:1038.40px;top:502px;font-size:11.8px;line-height:11.8px;color:#d9dfe8;font-weight:400;font-family:'Liberation Mono', monospace;transform:scaleY(1.08);transform-origin:0 8px;">00:08:74:38:01:b4</div>
<div class="t" style="left:1207.40px;top:502px;font-size:11.8px;line-height:11.8px;color:#d9dfe8;font-weight:400;font-family:'Liberation Mono', monospace;transform:scaleY(1.08);transform-origin:0 8px;">Dell Inc.</div>
<div class="t" style="left:1331.10px;top:502px;font-size:11.8px;line-height:11.8px;color:#d9dfe8;font-weight:400;font-family:'Liberation Mono', monospace;transform:scaleY(1.08);transform-origin:0 8px;">00:19:e3:e7:5d:23</div>
<div class="t" style="left:1500.70px;top:502px;font-size:11.8px;line-height:11.8px;color:#d9dfe8;font-weight:400;font-family:'Liberation Mono', monospace;transform:scaleY(1.08);transform-origin:0 8px;">Apple, Inc.</div>
<div class="t" style="left:1625.00px;top:502px;font-size:11.8px;line-height:11.8px;color:#d9dfe8;font-weight:400;font-family:'Liberation Mono', monospace;transform:scaleY(1.08);transform-origin:0 8px;">America/Los_Angeles</div>
<div class="r" style="left:381px;top:526px;width:1524px;height:1px;background:#343741;"></div>
<svg class="r" style="left:388px;top:537px" width="10" height="13" viewBox="0 0 10 13"><path d="M2.8 2.2 L7.2 6.5 L2.8 10.8" fill="none" stroke="#dfe5ef" stroke-width="1"/></svg>
<div class="t" style="left:413.40px;top:540px;font-size:11.8px;line-height:11.8px;color:#d9dfe8;font-weight:400;font-family:'Liberation Mono', monospace;transform:scaleY(1.08);transform-origin:0 8px;">Dec 13, 2009 @ 21:01:53.189</div>
<div class="t" style="left:621.80px;top:540px;font-size:11.8px;line-height:11.8px;color:#d9dfe8;font-weight:400;font-family:'Liberation Mono', monospace;transform:scaleY(1.08);transform-origin:0 8px;">192.168.1.105</div>
<div class="t" style="left:755.70px;top:540px;font-size:11.8px;line-height:11.8px;color:#d9dfe8;font-weight:400;font-family:'Liberation Mono', monospace;transform:scaleY(1.08);transform-origin:0 8px;">65.54.95.156</div>
<div class="t" style="left:907.10px;top:540px;font-size:11.8px;line-height:11.8px;color:#d9dfe8;font-weight:400;font-family:'Liberation Mono', monospace;transform:scaleY(1.08);transform-origin:0 8px;">80</div>
<div class="t" style="left:1038.40px;top:540px;font-size:11.8px;line-height:11.8px;color:#d9dfe8;font-weight:400;font-family:'Liberation Mono', monospace;transform:scaleY(1.08);transform-origin:0 8px;">00:08:74:38:01:b4</div>
<div class="t" style="left:1207.40px;top:540px;font-size:11.8px;line-height:11.8px;color:#d9dfe8;font-weight:400;font-family:'Liberation Mono', monospace;transform:scaleY(1.08);transform-origin:0 8px;">Dell Inc.</div>
<div class="t" style="left:1331.10px;top:540px;font-size:11.8px;line-height:11.8px;color:#d9dfe8;font-weight:400;font-family:'Liberation Mono', monospace;transform:scaleY(1.08);transform-origin:0 8px;">00:19:e3:e7:5d:23</div>
<div class="t" style="left:1500.70px;top:540px;font-size:11.8px;line-height:11.8px;color:#d9dfe8;font-weight:400;font-family:'Liberation Mono', monospace;transform:scaleY(1.08);transform-origin:0 8px;">Apple, Inc.</div>
<div class="t" style="left:1625.00px;top:540px;font-size:11.8px;line-height:11.8px;color:#d9dfe8;font-weight:400;font-family:'Liberation Mono', monospace;transform:scaleY(1.08);transform-origin:0 8px;">America/Los_Angeles</div>
<div class="r" style="left:381px;top:563px;width:1524px;height:1px;background:#343741;"></div>
<svg class="r" style="left:388px;top:574px" width="10" height="13" viewBox="0 0 10 13"><path d="M2.8 2.2 L7.2 6.5 L2.8 10.8" fill="none" stroke="#dfe5ef" stroke-width="1"/></svg>
<div class="t" style="left:413.40px;top:577px;font-size:11.8px;line-height:11.8px;color:#d9dfe8;font-weight:400;font-family:'Liberation Mono', monospace;transform:scaleY(1.08);transform-origin:0 8px;">Dec 13, 2009 @ 18:15:40.504</div>
<div class="t" style="left:621.80px;top:577px;font-size:11.8px;line-height:11.8px;color:#d9dfe8;font-weight:400;font-family:'Liberation Mono', monospace;transform:scaleY(1.08);transform-origin:0 8px;">192.168.1.105</div>
<div class="t" style="left:755.70px;top:577px;font-size:11.8px;line-height:11.8px;color:#d9dfe8;font-weight:400;font-family:'Liberation Mono', monospace;transform:scaleY(1.08);transform-origin:0 8px;">198.189.255.76</div>
<div class="t" style="left:907.10px;top:577px;font-size:11.8px;line-height:11.8px;color:#d9dfe8;font-weight:400;font-family:'Liberation Mono', monospace;transform:scaleY(1.08);transform-origin:0 8px;">80</div>
<div class="t" style="left:1038.40px;top:577px;font-size:11.8px;line-height:11.8px;color:#d9dfe8;font-weight:400;font-family:'Liberation Mono', monospace;transform:scaleY(1.08);transform-origin:0 8px;">00:08:74:38:01:b4</div>
<div class="t" style="left:1207.40px;top:577px;font-size:11.8px;line-height:11.8px;color:#d9dfe8;font-weight:400;font-family:'Liberation Mono', monospace;transform:scaleY(1.08);transform-origin:0 8px;">Dell Inc.</div>
<div class="t" style="left:1331.10px;top:577px;font-size:11.8px;line-height:11.8px;color:#d9dfe8;font-weight:400;font-family:'Liberation Mono', monospace;transform:scaleY(1.08);transform-origin:0 8px;">00:19:e3:e7:5d:23</div>
<div class="t" style="left:1500.70px;top:577px;font-size:11.8px;line-height:11.8px;color:#d9dfe8;font-weight:400;font-family:'Liberation Mono', monospace;transform:scaleY(1.08);transform-origin:0 8px;">Apple, Inc.</div>
<div class="t" style="left:1625.00px;top:577px;font-size:11.8px;line-height:11.8px;color:#d9dfe8;font-weight:400;font-family:'Liberation Mono', monospace;transform:scaleY(1.08);transform-origin:0 8px;">America/Los_Angeles</div>
<div class="r" style="left:381px;top:600px;width:1524px;height:1px;background:#343741;"></div>
<svg class="r" style="left:388px;top:611px" width="10" height="13" viewBox="0 0 10 13"><path d="M2.8 2.2 L7.2 6.5 L2.8 10.8" fill="none" stroke="#dfe5ef" stroke-width="1"/></svg>
<div class="t" style="left:413.40px;top:614px;font-size:11.8px;line-height:11.8px;color:#d9dfe8;font-weight:400;font-family:'Liberation Mono', monospace;transform:scaleY(1.08);transform-origin:0 8px;">Dec 13, 2009 @ 18:15:40.120</div>
<div class="t" style="left:621.80px;top:614px;font-size:11.8px;line-height:11.8px;color:#d9dfe8;font-weight:400;font-family:'Liberation Mono', monospace;transform:scaleY(1.08);transform-origin:0 8px;">192.168.1.105</div>
<div class="t" style="left:755.70px;top:614px;font-size:11.8px;line-height:11.8px;color:#d9dfe8;font-weight:400;font-family:'Liberation Mono', monospace;transform:scaleY(1.08);transform-origin:0 8px;">212.96.161.234</div>
<div class="t" style="left:907.10px;top:614px;font-size:11.8px;line-height:11.8px;color:#d9dfe8;font-weight:400;font-family:'Liberation Mono', monospace;transform:scaleY(1.08);transform-origin:0 8px;">80</div>
<div class="t" style="left:1038.40px;top:614px;font-size:11.8px;line-height:11.8px;color:#d9dfe8;font-weight:400;font-family:'Liberation Mono', monospace;transform:scaleY(1.08);transform-origin:0 8px;">00:08:74:38:01:b4</div>
<div class="t" style="left:1207.40px;top:614px;font-size:11.8px;line-height:11.8px;color:#d9dfe8;font-weight:400;font-family:'Liberation Mono', monospace;transform:scaleY(1.08);transform-origin:0 8px;">Dell Inc.</div>
<div class="t" style="left:1331.10px;top:614px;font-size:11.8px;line-height:11.8px;color:#d9dfe8;font-weight:400;font-family:'Liberation Mono', monospace;transform:scaleY(1.08);transform-origin:0 8px;">00:19:e3:e7:5d:23</div>
<div class="t" style="left:1500.70px;top:614px;font-size:11.8px;line-height:11.8px;color:#d9dfe8;font-weight:400;font-family:'Liberation Mono', monospace;transform:scaleY(1.08);transform-origin:0 8px;">Apple, Inc.</div>
<div class="t" style="left:1625.00px;top:614px;font-size:11.8px;line-height:11.8px;color:#d9dfe8;font-weight:400;font-family:'Liberation Mono', monospace;transform:scaleY(1.08);transform-origin:0 8px;">Europe/Prague</div>
<div class="r" style="left:381px;top:637px;width:1524px;height:1px;background:#343741;"></div>
<svg class="r" style="left:388px;top:648px" width="10" height="13" viewBox="0 0 10 13"><path d="M2.8 2.2 L7.2 6.5 L2.8 10.8" fill="none" stroke="#dfe5ef" stroke-width="1"/></svg>
<div class="t" style="left:413.40px;top:651px;font-size:11.8px;line-height:11.8px;color:#d9dfe8;font-weight:400;font-family:'Liberation Mono', monospace;transform:scaleY(1.08);transform-origin:0 8px;">Dec 13, 2009 @ 18:15:40.052</div>
<div class="t" style="left:621.80px;top:651px;font-size:11.8px;line-height:11.8px;color:#d9dfe8;font-weight:400;font-family:'Liberation Mono', monospace;transform:scaleY(1.08);transform-origin:0 8px;">192.168.1.105</div>
<div class="t" style="left:755.70px;top:651px;font-size:11.8px;line-height:11.8px;color:#d9dfe8;font-weight:400;font-family:'Liberation Mono', monospace;transform:scaleY(1.08);transform-origin:0 8px;">198.189.255.76</div>
<div class="t" style="left:907.10px;top:651px;font-size:11.8px;line-height:11.8px;color:#d9dfe8;font-weight:400;font-family:'Liberation Mono', monospace;transform:scaleY(1.08);transform-origin:0 8px;">80</div>
<div class="t" style="left:1038.40px;top:651px;font-size:11.8px;line-height:11.8px;color:#d9dfe8;font-weight:400;font-family:'Liberation Mono', monospace;transform:scaleY(1.08);transform-origin:0 8px;">00:08:74:38:01:b4</div>
<div class="t" style="left:1207.40px;top:651px;font-size:11.8px;line-height:11.8px;color:#d9dfe8;font-weight:400;font-family:'Liberation Mono', monospace;transform:scaleY(1.08);transform-origin:0 8px;">Dell Inc.</div>
<div class="t" style="left:1331.10px;top:651px;font-size:11.8px;line-height:11.8px;color:#d9dfe8;font-weight:400;font-family:'Liberation Mono', monospace;transform:scaleY(1.08);transform-origin:0 8px;">00:19:e3:e7:5d:23</div>
<div class="t" style="left:1500.70px;top:651px;font-size:11.8px;line-height:11.8px;color:#d9dfe8;font-weight:400;font-family:'Liberation Mono', monospace;transform:scaleY(1.08);transform-origin:0 8px;">Apple, Inc.</div>
<div class="t" style="left:1625.00px;top:651px;font-size:11.8px;line-height:11.8px;color:#d9dfe8;font-weight:400;font-family:'Liberation Mono', monospace;transform:scaleY(1.08);transform-origin:0 8px;">America/Los_Angeles</div>
<div class="r" style="left:381px;top:674px;width:1524px;height:1px;background:#343741;"></div>
<svg class="r" style="left:388px;top:685px" width="10" height="13" viewBox="0 0 10 13"><path d="M2.8 2.2 L7.2 6.5 L2.8 10.8" fill="none" stroke="#dfe5ef" stroke-width="1"/></svg>
<div class="t" style="left:413.40px;top:688px;font-size:11.8px;line-height:11.8px;color:#d9dfe8;font-weight:400;font-family:'Liberation Mono', monospace;transform:scaleY(1.08);transform-origin:0 8px;">Dec 13, 2009 @ 18:15:39.499</div>
<div class="t" style="left:621.80px;top:688px;font-size:11.8px;line-height:11.8px;color:#d9dfe8;font-weight:400;font-family:'Liberation Mono', monospace;transform:scaleY(1.08);transform-origin:0 8px;">192.168.1.105</div>
<div class="t" style="left:755.70px;top:688px;font-size:11.8px;line-height:11.8px;color:#d9dfe8;font-weight:400;font-family:'Liberation Mono', monospace;transform:scaleY(1.08);transform-origin:0 8px;">212.96.161.234</div>
<div class="t" style="left:907.10px;top:688px;font-size:11.8px;line-height:11.8px;color:#d9dfe8;font-weight:400;font-family:'Liberation Mono', monospace;transform:scaleY(1.08);transform-origin:0 8px;">80</div>
<div class="t" style="left:1038.40px;top:688px;font-size:11.8px;line-height:11.8px;color:#d9dfe8;font-weight:400;font-family:'Liberation Mono', monospace;transform:scaleY(1.08);transform-origin:0 8px;">00:08:74:38:01:b4</div>
<div class="t" style="left:1207.40px;top:688px;font-size:11.8px;line-height:11.8px;color:#d9dfe8;font-weight:400;font-family:'Liberation Mono', monospace;transform:scaleY(1.08);transform-origin:0 8px;">Dell Inc.</div>
<div class="t" style="left:1331.10px;top:688px;font-size:11.8px;line-height:11.8px;color:#d9dfe8;font-weight:400;font-family:'Liberation Mono', monospace;transform:scaleY(1.08);transform-origin:0 8px;">00:19:e3:e7:5d:23</div>
<div class="t" style="left:1500.70px;top:688px;font-size:11.8px;line-height:11.8px;color:#d9dfe8;font-weight:400;font-family:'Liberation Mono', monospace;transform:scaleY(1.08);transform-origin:0 8px;">Apple, Inc.</div>
<div class="t" style="left:1625.00px;top:688px;font-size:11.8px;line-height:11.8px;color:#d9dfe8;font-weight:400;font-family:'Liberation Mono', monospace;transform:scaleY(1.08);transform-origin:0 8px;">Europe/Prague</div>
<div class="r" style="left:381px;top:712px;width:1524px;height:1px;background:#343741;"></div>
<svg class="r" style="left:388px;top:723px" width="10" height="13" viewBox="0 0 10 13"><path d="M2.8 2.2 L7.2 6.5 L2.8 10.8" fill="none" stroke="#dfe5ef" stroke-width="1"/></svg>
<div class="t" style="left:413.40px;top:726px;font-size:11.8px;line-height:11.8px;color:#d9dfe8;font-weight:400;font-family:'Liberation Mono', monospace;transform:scaleY(1.08);transform-origin:0 8px;">Dec 13, 2009 @ 18:15:36.586</div>
<div class="t" style="left:621.80px;top:726px;font-size:11.8px;line-height:11.8px;color:#d9dfe8;font-weight:400;font-family:'Liberation Mono', monospace;transform:scaleY(1.08);transform-origin:0 8px;">192.168.1.105</div>
<div class="t" style="left:755.70px;top:726px;font-size:11.8px;line-height:11.8px;color:#d9dfe8;font-weight:400;font-family:'Liberation Mono', monospace;transform:scaleY(1.08);transform-origin:0 8px;">212.96.161.234</div>
<div class="t" style="left:907.10px;top:726px;font-size:11.8px;line-height:11.8px;color:#d9dfe8;font-weight:400;font-family:'Liberation Mono', monospace;transform:scaleY(1.08);transform-origin:0 8px;">80</div>
<div class="t" style="left:1038.40px;top:726px;font-size:11.8px;line-height:11.8px;color:#d9dfe8;font-weight:400;font-family:'Liberation Mono', monospace;transform:scaleY(1.08);transform-origin:0 8px;">00:08:74:38:01:b4</div>
<div class="t" style="left:1207.40px;top:726px;font-size:11.8px;line-height:11.8px;color:#d9dfe8;font-weight:400;font-family:'Liberation Mono', monospace;transform:scaleY(1.08);transform-origin:0 8px;">Dell Inc.</div>
<div class="t" style="left:1331.10px;top:726px;font-size:11.8px;line-height:11.8px;color:#d9dfe8;font-weight:400;font-family:'Liberation Mono', monospace;transform:scaleY(1.08);transform-origin:0 8px;">00:19:e3:e7:5d:23</div>
<div class="t" style="left:1500.70px;top:726px;font-size:11.8px;line-height:11.8px;color:#d9dfe8;font-weight:400;font-family:'Liberation Mono', monospace;transform:scaleY(1.08);transform-origin:0 8px;">Apple, Inc.</div>
<div class="t" style="left:1625.00px;top:726px;font-size:11.8px;line-height:11.8px;color:#d9dfe8;font-weight:400;font-family:'Liberation Mono', monospace;transform:scaleY(1.08);transform-origin:0 8px;">Europe/Prague</div>
<div class="r" style="left:381px;top:749px;width:1524px;height:1px;background:#343741;"></div>
<svg class="r" style="left:388px;top:760px" width="10" height="13" viewBox="0 0 10 13"><path d="M2.8 2.2 L7.2 6.5 L2.8 10.8" fill="none" stroke="#dfe5ef" stroke-width="1"/></svg>
<div class="t" style="left:413.40px;top:763px;font-size:11.8px;line-height:11.8px;color:#d9dfe8;font-weight:400;font-family:'Liberation Mono', monospace;transform:scaleY(1.08);transform-origin:0 8px;">Dec 13, 2009 @ 18:15:33.751</div>
<div class="t" style="left:621.80px;top:763px;font-size:11.8px;line-height:11.8px;color:#d9dfe8;font-weight:400;font-family:'Liberation Mono', monospace;transform:scaleY(1.08);transform-origin:0 8px;">192.168.1.105</div>
<div class="t" style="left:755.70px;top:763px;font-size:11.8px;line-height:11.8px;color:#d9dfe8;font-weight:400;font-family:'Liberation Mono', monospace;transform:scaleY(1.08);transform-origin:0 8px;">212.96.161.234</div>
<div class="t" style="left:907.10px;top:763px;font-size:11.8px;line-height:11.8px;color:#d9dfe8;font-weight:400;font-family:'Liberation Mono', monospace;transform:scaleY(1.08);transform-origin:0 8px;">80</div>
<div class="t" style="left:1038.40px;top:763px;font-size:11.8px;line-height:11.8px;color:#d9dfe8;font-weight:400;font-family:'Liberation Mono', monospace;transform:scaleY(1.08);transform-origin:0 8px;">00:08:74:38:01:b4</div>
<div class="t" style="left:1207.40px;top:763px;font-size:11.8px;line-height:11.8px;color:#d9dfe8;font-weight:400;font-family:'Liberation Mono', monospace;transform:scaleY(1.08);transform-origin:0 8px;">Dell Inc.</div>
<div class="t" style="left:1331.10px;top:763px;font-size:11.8px;line-height:11.8px;color:#d9dfe8;font-weight:400;font-family:'Liberation Mono', monospace;transform:scaleY(1.08);transform-origin:0 8px;">00:19:e3:e7:5d:23</div>
<div class="t" style="left:1500.70px;top:763px;font-size:11.8px;line-height:11.8px;color:#d9dfe8;font-weight:400;font-family:'Liberation Mono', monospace;transform:scaleY(1.08);transform-origin:0 8px;">Apple, Inc.</div>
<div class="t" style="left:1625.00px;top:763px;font-size:11.8px;line-height:11.8px;color:#d9dfe8;font-weight:400;font-family:'Liberation Mono', monospace;transform:scaleY(1.08);transform-origin:0 8px;">Europe/Prague</div>
<div class="r" style="left:381px;top:786px;width:1524px;height:1px;background:#343741;"></div>
</body></html>
